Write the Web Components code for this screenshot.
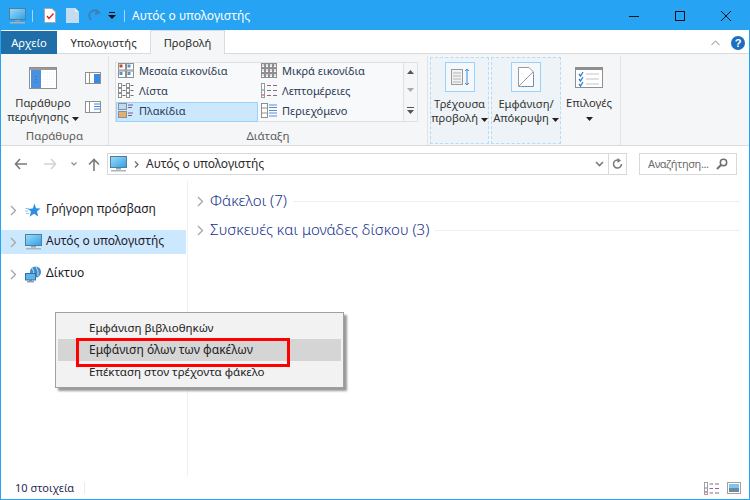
<!DOCTYPE html>
<html lang="el">
<head>
<meta charset="utf-8">
<title>Αυτός ο υπολογιστής</title>
<style>
    html, body { margin: 0; padding: 0; }
    body { width: 750px; height: 500px; overflow: hidden; font-family: "Noto Sans", "Open Sans", sans-serif; font-size: 12px; }
</style>
</head>
<body>
<explorer-window>
    <title-bar slot="title" caption="Αυτός ο υπολογιστής"></title-bar>
    <ribbon-tabs slot="tabs"></ribbon-tabs>
    <view-ribbon slot="ribbon"></view-ribbon>
    <address-row slot="address" path="Αυτός ο υπολογιστής" hint="Αναζήτηση..."></address-row>
    <nav-pane slot="nav">
        <nav-item icon="star">Γρήγορη πρόσβαση</nav-item>
        <nav-item icon="pc" selected>Αυτός ο υπολογιστής</nav-item>
        <nav-item icon="net">Δίκτυο</nav-item>
    </nav-pane>
    <content-pane slot="content">
        <group-header>Φάκελοι (7)</group-header>
        <group-header>Συσκευές και μονάδες δίσκου (3)</group-header>
    </content-pane>
    <status-bar slot="status">10 στοιχεία</status-bar>
    <context-menu slot="overlay">
        <menu-row>Εμφάνιση βιβλιοθηκών</menu-row>
        <menu-row hover>Εμφάνιση όλων των φακέλων</menu-row>
        <menu-row>Επέκταση στον τρέχοντα φάκελο</menu-row>
    </context-menu>
</explorer-window>

<script>
const icons = {
    pc: `<svg width="17" height="16" viewBox="0 0 17 16"><defs><linearGradient id="s" x1="0" y1="0" x2="1" y2="1"><stop offset="0" stop-color="#9fdcf8"/><stop offset="1" stop-color="#2f9fe6"/></linearGradient></defs><rect x="0.5" y="0.5" width="16" height="11" fill="url(#s)" stroke="#4f7f9f"/><rect x="6" y="12" width="5" height="1.5" fill="#8fa3b3"/><rect x="1" y="14" width="15" height="1.5" fill="#a9b4bc"/></svg>`,
    star: `<svg width="16" height="15" viewBox="0 0 16 15"><path d="M9.5 0.5 L11 5.2 L15.5 5.4 L12 8.4 L13.2 13.5 L9 10.7 L4.6 13.8 L6 8.6 L3 6 L7.8 5.4 Z" fill="#2d8fe3"/><path d="M0.5 5.5 H4 M0 8 H3 M1 10.5 H4" stroke="#8cc4ee" stroke-width="1"/></svg>`,
    net: `<svg width="17" height="17" viewBox="0 0 17 17"><circle cx="10.5" cy="6" r="5.5" fill="#3f88c9"/><path d="M7 2 Q10 5 8 10 M11 1 Q14 5 13 10" stroke="#c7e3f5" fill="none"/><rect x="0.5" y="7.5" width="10" height="6.5" fill="#5db6ee" stroke="#356f9c"/><rect x="4" y="14" width="3" height="1.2" fill="#7a8c99"/><rect x="2" y="15.2" width="7" height="1.2" fill="#7a8c99"/></svg>`,
    chevron: (c) => `<svg width="7" height="11" viewBox="0 0 7 11"><path d="M1 1 L5.5 5.5 L1 10" fill="none" stroke="${c}" stroke-width="1.3"/></svg>`,
    caret: `<svg width="7" height="4" viewBox="0 0 7 4"><path d="M0 0 H7 L3.5 4 Z" fill="#222"/></svg>`
};

// Title bar with quick access toolbar
class TitleBar extends HTMLElement {
    constructor() {
        super();
        this.attachShadow({ mode: "open" }).innerHTML = `
            <style>
                :host { display: flex; align-items: center; height: 29px; background: #26a3f2; color: #fff; font-size: 12px; }
                .qat { display: flex; align-items: center; padding-left: 8px; }
                .sep { width: 1px; height: 12px; background: #a6d7f8; }
                .name { color: #fff; padding-bottom: 1px; }
                .ctl { margin-left: auto; display: flex; }
                .ctl div { width: 46px; height: 29px; display: flex; align-items: center; justify-content: center; }
            </style>
            <div class="qat">
                ${icons.pc}
                <span class="sep" style="margin:0 11px 0 6px"></span>
                <svg width="12" height="15" viewBox="0 0 12 15"><path d="M0.5 0.5 H8 L11.5 4 V14.5 H0.5 Z" fill="#fff" stroke="#a9a9a9"/><path d="M3 8 L5 10.5 L9.5 5.5" fill="none" stroke="#d22" stroke-width="1.4"/></svg>
                <svg style="margin-left:10px" width="13" height="15" viewBox="0 0 13 15"><path d="M0 0 H9 L13 4 V15 H0 Z" fill="#c4dcf0"/><path d="M9 0 V4 H13" fill="#e4eff8"/></svg>
                <svg style="margin-left:9px" width="14" height="15" viewBox="0 0 14 15"><path d="M3 12 Q-1 6 4 3 Q8 1 10 4" fill="none" stroke="#3f7fb8" stroke-width="2"/><path d="M8 1 L13 5 L7 7 Z" fill="#3f7fb8"/></svg>
                <svg style="margin-left:6px" width="8" height="8" viewBox="0 0 8 8"><rect x="1" y="0" width="6" height="1" fill="#111"/><path d="M0 3 H8 L4 7 Z" fill="#111"/></svg>
                <span class="sep" style="margin:0 7px 0 8px"></span>
            </div>
            <span class="name"></span>
            <div class="ctl">
                <div><svg width="10" height="10"><path d="M0 5.5 H10" stroke="#111"/></svg></div>
                <div><svg width="10" height="10"><rect x="0.5" y="0.5" width="9" height="9" fill="none" stroke="#111"/></svg></div>
                <div><svg width="10" height="10"><path d="M0 0 L10 10 M10 0 L0 10" stroke="#111"/></svg></div>
            </div>`;
        this.shadowRoot.querySelector(".name").textContent = this.getAttribute("caption");
    }
}

class RibbonTabs extends HTMLElement {
    constructor() {
        super();
        this.attachShadow({ mode: "open" }).innerHTML = `
            <style>
                :host { display: flex; align-items: flex-end; height: 23px; background: #fff; border-bottom: 1px solid #dadbdc; font-size: 11.2px; position: relative; color: #2b2b2b; }
                .tab { height: 23px; display: flex; align-items: center; justify-content: center; margin-bottom: -1px; box-sizing: border-box; padding-bottom: 1px; }
                .file { width: 56px; background: #1f6ea8; color: #fff; }
                .home { width: 93px; }
                .view { width: 75px; background: #f5f6f7; border: 1px solid #dadbdc; border-bottom: 0; height: 24px; }
                .right { margin-left: auto; display: flex; align-items: center; gap: 11px; padding: 0 4px 3px 0; }
                .help { width: 14px; height: 14px; border-radius: 50%; background: #1c6fc0; color: #fff; font: bold 11px/14px "Liberation Sans", sans-serif; text-align: center; }
            </style>
            <div class="tab file">Αρχείο</div>
            <div class="tab home">Υπολογιστής</div>
            <div class="tab view">Προβολή</div>
            <div class="right">
                <svg width="9" height="6"><path d="M0.5 5 L4.5 1 L8.5 5" fill="none" stroke="#b5b5b5" stroke-width="1.2"/></svg>
                <div class="help">?</div>
            </div>`;
    }
}

// One group of the ribbon, label at the bottom
class RibbonGroup extends HTMLElement {
    constructor() {
        super();
        this.attachShadow({ mode: "open" }).innerHTML = `
            <style>
                :host { display: flex; flex-direction: column; box-sizing: border-box; height: 89px; margin-top: 2px; border-right: 1px solid #e2e3e4; flex: none; }
                .body { flex: 1; display: flex; min-height: 0; }
                .label { height: 16px; line-height: 14px; text-align: center; color: #5c5c5c; font-size: 11.5px; }
            </style>
            <div class="body"><slot></slot></div>
            <div class="label"></div>`;
        this.shadowRoot.querySelector(".label").textContent = this.getAttribute("label") || "";
    }
}

class LargeButton extends HTMLElement {
    constructor() {
        super();
        this.attachShadow({ mode: "open" }).innerHTML = `
            <style>
                :host { display: flex; flex-direction: column; align-items: center; box-sizing: border-box; font-size: 11.2px; line-height: 14px; color: #333; text-align: center; flex: none; }
                :host([active]) { background: #eef3f7; border: 1px dashed #b5dcf7; }
                .ico { display: flex; align-items: center; justify-content: center; height: 30px; width: 30px; box-sizing: border-box; margin-bottom: 3px; }
                :host([active]) .ico { border: 1px solid #99d1ff; background: #f5f8fb; margin-top: 4px; margin-bottom: 5px; }
                ::slotted(span) { display: block; white-space: nowrap; }
            </style>
            <div class="ico"><slot name="icon"></slot></div>
            <slot></slot>`;
    }
}

class GalleryItem extends HTMLElement {
    constructor() {
        super();
        this.attachShadow({ mode: "open" }).innerHTML = `
            <style>
                :host { display: flex; align-items: center; height: 20px; box-sizing: border-box; padding-left: 2px; gap: 5px; font-size: 11px; color: #2b3a55; white-space: nowrap; }
                :host([selected]) { background: #cce8ff; border: 1px solid #99d1ff; padding-left: 1px; }
                .t { padding-bottom: 4px; }
                .i { display: flex; }
            </style>
            <span class="i"><slot name="icon"></slot></span><span class="t"><slot></slot></span>`;
    }
}

class ViewRibbon extends HTMLElement {
    constructor() {
        super();
        const caret = icons.caret;
        const grid = (c, r, s) => {
            let out = `<svg width="16" height="15" viewBox="0 0 16 15">`;
            for (let y = 0; y < r; y++) for (let x = 0; x < c; x++) {
                const w = 16 / c, h = 15 / r;
                out += `<rect x="${x * w + .5}" y="${y * h + .5}" width="${w - 1}" height="${h - 1}" fill="#fff" stroke="#8f8f8f"/>`;
                out += `<rect x="${x * w + 1.5}" y="${y * h + 1.5}" width="${s}" height="${s}" fill="${(x + y) % 3 == 0 ? "#c0453a" : "#5b90c8"}"/>`;
            }
            return out + `</svg>`;
        };
        const list = (cols) => {
            let out = `<svg width="16" height="15" viewBox="0 0 16 15">`;
            for (let y = 0; y < 3; y++) for (let x = 0; x < cols; x++) {
                out += `<rect x="${x * 8 + .5}" y="${y * 5 + .5}" width="3" height="4" fill="#fff" stroke="#8f8f8f"/><path d="M${x * 8 + 4.5} ${y * 5 + 2.5} H${x * 8 + 7.5}" stroke="#6f6f7f"/>`;
            }
            return out + `</svg>`;
        };
        const details = `<svg width="16" height="15" viewBox="0 0 16 15"><rect x="0.5" y="0.5" width="3" height="14" fill="#fff" stroke="#9a9a9a"/><rect x="1.5" y="6" width="1" height="2" fill="#3b8ae0"/><rect x="1.5" y="11" width="1" height="2" fill="#d22"/><path d="M6 2.5 H10 M12 2.5 H16 M6 7.5 H10 M12 7.5 H16 M6 12.5 H10 M12 12.5 H16" stroke="#8a6a88"/></svg>`;
        const tiles = `<svg width="16" height="15" viewBox="0 0 16 15"><rect x="0.5" y="0.5" width="8" height="6" fill="#bcdcf6" stroke="#8f8f8f"/><rect x="0.5" y="8.5" width="8" height="6" fill="#e0b070" stroke="#8f8f8f"/><path d="M10 2 H15 M10 4.5 H14 M10 10 H15 M10 12.5 H14" stroke="#7a5a88"/></svg>`;
        const content = `<svg width="16" height="15" viewBox="0 0 16 15"><rect x="0.5" y="0.5" width="6" height="14" fill="#fff" stroke="#8f8f8f"/><path d="M1 5 H6 M1 10 H6" stroke="#8f8f8f"/><path d="M8 2 H16 M8 4.5 H16 M8 7.5 H16 M8 10 H16 M8 13 H16" stroke="#5b8ed6"/></svg>`;
        this.attachShadow({ mode: "open" }).innerHTML = `
            <style>
                :host { display: flex; height: 92px; box-sizing: border-box; background: #f5f6f7; border-bottom: 1px solid #dadbdc; }
                .pane { display: flex; }
                .pane large-button { width: 84px; padding-top: 7px; }
                .pane .small { display: flex; flex-direction: column; gap: 17px; padding-top: 16px; }
                .gallery-wrap { padding: 6px 9px 0 6px; }
                .gallery { display: grid; grid-template-columns: 142px 143px 14px; column-gap: 1px; width: 303px; height: 60px; box-sizing: border-box; border: 1px solid #dfe0e1; background: #f8f9fa; }
                .col { display: flex; flex-direction: column; margin: -1px 0; }
                .scroll { display: flex; flex-direction: column; align-items: center; justify-content: space-around; border-left: 1px solid #dfe0e1; background: #f5f6f7; }
                .current { display: flex; gap: 2px; padding: 1px 0 0 2px; }
                .current large-button { height: 87px; }
            </style>
            <ribbon-group label="Παράθυρα" style="width:108px">
                <div class="pane">
                    <large-button>
                        <svg slot="icon" width="28" height="22" viewBox="0 0 28 22"><rect x="0.5" y="0.5" width="27" height="21" fill="#fff" stroke="#8f8f8f"/><rect x="1" y="1" width="26" height="2" fill="#9a9a9a"/><rect x="2" y="3" width="10" height="18" fill="#4a90e0"/><path d="M7 9 V17" stroke="#2f6db5" stroke-dasharray="1 2"/><path d="M14 6 H26 M14 9 H26 M14 12 H26 M14 15 H26 M14 18 H26" stroke="#eef0f2" stroke-dasharray="1 1"/></svg>
                        <span>Παράθυρο</span><span>περιήγησης ${caret}</span>
                    </large-button>
                    <div class="small">
                        <svg width="16" height="12" viewBox="0 0 16 12"><rect x="0.5" y="0.5" width="15" height="11" fill="#fff" stroke="#8f8f8f"/><rect x="9" y="2" width="6" height="9" fill="#3b8ae0"/><path d="M4.5 1 V11" stroke="#8f8f8f"/></svg>
                        <svg width="16" height="12" viewBox="0 0 16 12"><rect x="0.5" y="0.5" width="15" height="11" fill="#fff" stroke="#8f8f8f"/><path d="M4.5 1 V11" stroke="#8f8f8f"/><path d="M9 3 H15 M9 5.5 H15 M9 8 H15" stroke="#3b8ae0"/></svg>
                    </div>
                </div>
            </ribbon-group>
            <ribbon-group label="Διάταξη" style="width:319px">
                <div class="gallery-wrap">
                    <div class="gallery">
                        <div class="col">
                            <gallery-item><span slot="icon">${grid(2, 2, 3)}</span>Μεσαία εικονίδια</gallery-item>
                            <gallery-item><span slot="icon">${list(2)}</span>Λίστα</gallery-item>
                            <gallery-item selected><span slot="icon">${tiles}</span>Πλακίδια</gallery-item>
                        </div>
                        <div class="col">
                            <gallery-item><span slot="icon">${grid(4, 3, 1)}</span>Μικρά εικονίδια</gallery-item>
                            <gallery-item><span slot="icon">${details}</span>Λεπτομέρειες</gallery-item>
                            <gallery-item><span slot="icon">${content}</span>Περιεχόμενο</gallery-item>
                        </div>
                        <div class="scroll">
                            <svg width="7" height="4"><path d="M0 4 H7 L3.5 0 Z" fill="#555"/></svg>
                            <svg width="7" height="4"><path d="M0 0 H7 L3.5 4 Z" fill="#aaa"/></svg>
                            <svg width="7" height="7"><rect width="7" height="1" fill="#555"/><path d="M0 3 H7 L3.5 7 Z" fill="#555"/></svg>
                        </div>
                    </div>
                </div>
            </ribbon-group>
            <ribbon-group style="width:193px">
                <div class="current">
                    <large-button active style="width:59px">
                        <svg slot="icon" width="22" height="20" viewBox="0 0 22 20"><rect x="2.5" y="2.5" width="11" height="15" fill="#f2f2f2" stroke="#9a9a9a"/><path d="M4 6 H12 M4 9 H12 M4 12 H12 M4 15 H12" stroke="#b4b4b4"/><path d="M18 2 V18 M16 4 L18 2 L20 4 M16 16 L18 18 L20 16" fill="none" stroke="#3b8ae0"/></svg>
                        <span>Τρέχουσα</span><span>προβολή ${caret}</span>
                    </large-button>
                    <large-button active style="width:70px">
                        <svg slot="icon" width="20" height="22" viewBox="0 0 20 22"><path d="M2.5 1.5 H13 L17.5 6 V20.5 H2.5 Z" fill="#fff" stroke="#9a9a9a"/><path d="M3 20 L17 6" stroke="#9a9a9a"/><path d="M17.5 9 V20.5 H5" fill="none" stroke="#3b8ae0" stroke-dasharray="1.5 1.5"/></svg>
                        <span>Εμφάνιση/</span><span>Απόκρυψη ${caret}</span>
                    </large-button>
                    <large-button style="width:52px;padding-top:6px">
                        <svg slot="icon" width="28" height="22" viewBox="0 0 28 22"><rect x="0.5" y="0.5" width="27" height="20" fill="#fff" stroke="#8f8f8f"/><rect x="1" y="1" width="26" height="2" fill="#8f8f8f"/><path d="M4 7 L5.5 9 L8 5 M4 12 L5.5 14 L8 10 M4 17 L5.5 19 L8 15" fill="none" stroke="#2f7fd0" stroke-width="1.3"/><path d="M11 7 H24 M11 12 H24 M11 17 H24" stroke="#c4c4c4"/></svg>
                        <span>Επιλογές</span><span>${caret}</span>
                    </large-button>
                </div>
            </ribbon-group>`;
    }
}

class AddressRow extends HTMLElement {
    constructor() {
        super();
        this.attachShadow({ mode: "open" }).innerHTML = `
            <style>
                :host { display: flex; align-items: center; height: 35px; padding-top: 1px; box-sizing: border-box; background: #fff; font-size: 12px; color: #2b2b2b; }
                .nav { display: flex; align-items: center; width: 106px; padding-left: 13px; box-sizing: border-box; }
                .box { height: 22px; box-sizing: border-box; border: 1px solid #d9d9d9; display: flex; align-items: center; }
                .path { width: 520px; gap: 6px; padding-left: 2px; }
                .path .end { margin-left: auto; display: flex; height: 100%; align-items: center; }
                .finder { width: 98px; margin-left: 12px; padding: 0 8px 0 8px; justify-content: space-between; color: #6d6d6d; font-size: 11px; letter-spacing: -0.4px; }
                .t { padding-bottom: 2px; white-space: nowrap; }
            </style>
            <div class="nav">
                <svg width="13" height="12" viewBox="0 0 13 12"><path d="M6 1 L1.5 6 L6 11 M2 6 H13" fill="none" stroke="#7a7a7a" stroke-width="1.6"/></svg>
                <svg style="margin-left:17px" width="13" height="12" viewBox="0 0 13 12"><path d="M7 1 L11.5 6 L7 11 M11 6 H0" fill="none" stroke="#d4d4d4" stroke-width="1.6"/></svg>
                <svg style="margin-left:14px" width="6" height="4" viewBox="0 0 6 4"><path d="M0.5 0.5 L3 3 L5.5 0.5" fill="none" stroke="#8a8a8a" stroke-width="1.2"/></svg>
                <svg style="margin-left:11px" width="12" height="13" viewBox="0 0 12 13"><path d="M1 6.5 L6 1.5 L11 6.5 M6 2 V13" fill="none" stroke="#7a7a7a" stroke-width="1.6"/></svg>
            </div>
            <div class="box path">
                ${icons.pc}
                <svg style="margin:0 1px" width="5" height="7" viewBox="0 0 5 7"><path d="M1 0.5 L4 3.5 L1 6.5" fill="none" stroke="#666" stroke-width="1.2"/></svg>
                <span class="t" id="p"></span>
                <div class="end">
                    <svg style="margin-right:4px" width="9" height="6"><path d="M1 1 L4.5 4.5 L8 1" fill="none" stroke="#7a7a7a" stroke-width="1.6"/></svg>
                    <span style="width:1px;height:100%;background:#d9d9d9"></span>
                    <svg style="margin:0 3px" width="11" height="12" viewBox="0 0 11 12"><path d="M9.5 6 A4 4 0 1 1 7 2.3" fill="none" stroke="#7a7a7a" stroke-width="1.5"/><path d="M5.5 0 L9 2.5 L5.5 5 Z" fill="#7a7a7a"/></svg>
                </div>
            </div>
            <div class="box finder">
                <span class="t" id="h"></span>
                <svg width="12" height="12" viewBox="0 0 12 12"><circle cx="7.5" cy="4.5" r="3.2" fill="none" stroke="#6f6f6f" stroke-width="1.5"/><path d="M5 7 L1 11" stroke="#6f6f6f" stroke-width="2"/></svg>
            </div>`;
        this.shadowRoot.getElementById("p").textContent = this.getAttribute("path");
        this.shadowRoot.getElementById("h").textContent = this.getAttribute("hint");
    }
}

class NavPane extends HTMLElement {
    constructor() {
        super();
        this.attachShadow({ mode: "open" }).innerHTML = `
            <style>
                :host { display: block; width: 187px; height: 100%; box-sizing: border-box; padding-top: 17px; border-right: 1px solid #f0f0f0; }
            </style>
            <slot></slot>`;
    }
}

class NavItem extends HTMLElement {
    constructor() {
        super();
        const ic = icons[this.getAttribute("icon")];
        this.attachShadow({ mode: "open" }).innerHTML = `
            <style>
                :host { display: flex; align-items: center; height: 24px; margin: 0 1px 8px 0; font-size: 12px; color: #1b1b2a; white-space: nowrap; }
                :host([selected]) { background: #cce8ff; }
                .arrow { width: 24px; padding-left: 9px; box-sizing: border-box; display: flex; }
                .ic { width: 21px; display: flex; }
                .t { padding-bottom: 3px; }
            </style>
            <span class="arrow">${icons.chevron("#a6a6a6")}</span>
            <span class="ic">${ic}</span>
            <span class="t"><slot></slot></span>`;
    }
}

class ContentPane extends HTMLElement {
    constructor() {
        super();
        this.attachShadow({ mode: "open" }).innerHTML = `
            <style>
                :host { display: block; flex: 1; padding: 10px 9px 0 9px; }
            </style>
            <slot></slot>`;
    }
}

class GroupHeader extends HTMLElement {
    constructor() {
        super();
        this.attachShadow({ mode: "open" }).innerHTML = `
            <style>
                :host { display: flex; align-items: center; height: 21px; margin-bottom: 8px; font-size: 15px; font-weight: 300; color: #16308c; white-space: nowrap; }
                .chev { width: 13px; display: flex; }
                .t { padding-bottom: 3px; }
                .line { flex: 1; height: 1px; background: #e6effa; margin-left: 6px; }
            </style>
            <span class="chev">${icons.chevron("#a6a6a6")}</span>
            <span class="t"><slot></slot></span>
            <span class="line"></span>`;
    }
}

class StatusBar extends HTMLElement {
    constructor() {
        super();
        this.attachShadow({ mode: "open" }).innerHTML = `
            <style>
                :host { display: flex; align-items: center; height: 22px; padding-left: 14px; box-sizing: border-box; background: #fff; font-size: 11px; color: #2b2b55; }
                .t { padding-bottom: 1px; }
                .sep { width: 1px; height: 12px; background: #ececec; margin-left: 10px; }
                .views { margin-left: auto; display: flex; gap: 7px; padding-right: 8px; }
            </style>
            <span class="t"><slot></slot></span>
            <span class="sep"></span>
            <div class="views">
                <svg width="16" height="13" viewBox="0 0 16 13"><rect x="0.5" y="0.5" width="3" height="12" fill="#fff" stroke="#a0a0a0"/><rect x="1.5" y="5" width="1" height="2" fill="#3b8ae0"/><rect x="1.5" y="9" width="1" height="2" fill="#d22"/><path d="M5.5 2 H9 M11 2 H15 M5.5 6.5 H9 M11 6.5 H15 M5.5 11 H9 M11 11 H15" stroke="#8a6a88"/></svg>
                <svg width="14" height="12" viewBox="0 0 14 12"><rect x="0.5" y="0.5" width="13" height="11" fill="#fff" stroke="#a0a0a0"/><rect x="2" y="2" width="10" height="4" fill="#7fc4ee"/><rect x="2" y="6" width="10" height="4" fill="#6a8aa0"/></svg>
            </div>`;
    }
}

class ContextMenu extends HTMLElement {
    constructor() {
        super();
        this.attachShadow({ mode: "open" }).innerHTML = `
            <style>
                :host { position: absolute; left: 54px; top: 311px; width: 289px; height: 76px; box-sizing: border-box; padding: 4px 2px; background: #f2f2f2; border: 1px solid #a0a0a0; box-shadow: 3px 3px 2px #9a9a9a; font-size: 11.5px; color: #222; }
                .mark { position: absolute; left: 20px; top: 25px; width: 214px; height: 29px; box-sizing: border-box; border: 3px solid #f00; }
            </style>
            <slot></slot>
            <div class="mark"></div>`;
    }
}

class MenuRow extends HTMLElement {
    constructor() {
        super();
        this.attachShadow({ mode: "open" }).innerHTML = `
            <style>
                :host { display: flex; align-items: center; height: 22px; padding-left: 31px; white-space: nowrap; }
                :host([hover]) { background: #d5d5d5; font-size: 12px; }
                .t { padding-bottom: 2px; }
            </style>
            <span class="t"><slot></slot></span>`;
    }
}

class ExplorerWindow extends HTMLElement {
    constructor() {
        super();
        this.attachShadow({ mode: "open" }).innerHTML = `
            <style>
                :host { display: flex; flex-direction: column; position: relative; width: 750px; height: 500px; box-sizing: border-box; border: 1px solid #26a3f2; background: #fff; overflow: hidden; }
                .main { flex: 1; display: flex; min-height: 0; }
            </style>
            <slot name="title"></slot>
            <slot name="tabs"></slot>
            <slot name="ribbon"></slot>
            <slot name="address"></slot>
            <div class="main"><slot name="nav"></slot><slot name="content"></slot></div>
            <slot name="status"></slot>
            <slot name="overlay"></slot>`;
    }
}

customElements.define("title-bar", TitleBar);
customElements.define("ribbon-tabs", RibbonTabs);
customElements.define("ribbon-group", RibbonGroup);
customElements.define("large-button", LargeButton);
customElements.define("gallery-item", GalleryItem);
customElements.define("view-ribbon", ViewRibbon);
customElements.define("address-row", AddressRow);
customElements.define("nav-pane", NavPane);
customElements.define("nav-item", NavItem);
customElements.define("content-pane", ContentPane);
customElements.define("group-header", GroupHeader);
customElements.define("status-bar", StatusBar);
customElements.define("context-menu", ContextMenu);
customElements.define("menu-row", MenuRow);
customElements.define("explorer-window", ExplorerWindow);
</script>
</body>
</html>
